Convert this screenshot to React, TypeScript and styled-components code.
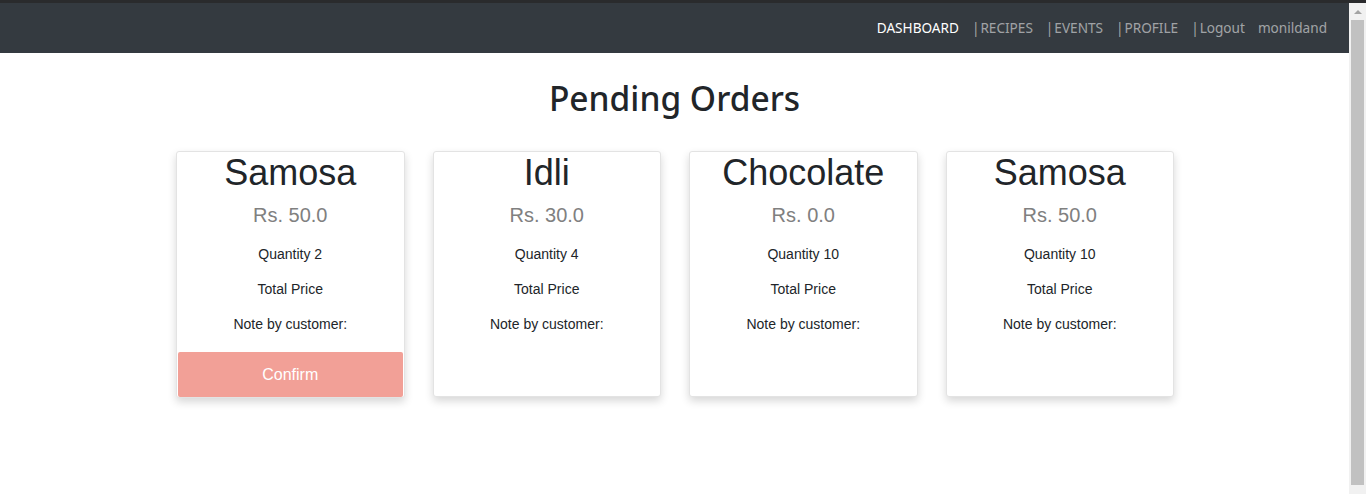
import React from "react";
import styled, { createGlobalStyle } from "styled-components";

const GlobalStyle = createGlobalStyle`
  html, body {
    margin: 0;
    padding: 0;
    height: 100%;
    overflow: hidden;
    background: #2b2b2b;
  }
  #root { height: 100%; }
  * { box-sizing: border-box; }
`;

const Frame = styled.div`
  display: flex;
  flex-direction: column;
  height: 100vh;
`;

const TopEdge = styled.div`
  height: 3px;
  flex: none;
  background: #2a2b2d;
`;

const Viewport = styled.div`
  flex: 1;
  display: flex;
  min-height: 0;
`;

const Page = styled.main`
  flex: 1;
  min-width: 0;
  overflow: hidden;
  background: #ffffff;
  font-family: "Liberation Sans", Arial, sans-serif;
  color: #212529;
`;

const ScrollBar = styled.div`
  width: 17px;
  flex: none;
  background: #f1f1f1;
  display: flex;
  flex-direction: column;
  align-items: center;
`;

const ScrollArrow = styled.div`
  height: 17px;
  width: 17px;
  flex: none;
  display: flex;
  align-items: center;
  justify-content: center;
`;

const ScrollThumb = styled.div`
  width: 13px;
  height: 465px;
  background: #c1c1c1;
`;

const NavBar = styled.nav`
  height: 50px;
  background: #343a40;
  display: flex;
  align-items: center;
  justify-content: flex-end;
  padding: 0 22px 2px 0;
  gap: 13px;
  font-family: "Noto Sans", "Open Sans", sans-serif;
  font-size: 13.6px;
`;

const NavLink = styled.a<{ $active?: boolean }>`
  color: ${(p) => (p.$active ? "#ffffff" : "rgba(255,255,255,0.55)")};
  text-decoration: none;
  white-space: nowrap;
`;

const Pipe = styled.span`
  margin-right: 1px;
`;

const Heading = styled.h2`
  margin: 22px 0 0;
  height: 47px;
  text-align: center;
  font-family: "Noto Sans", "Open Sans", sans-serif;
  font-weight: 500;
  font-size: 33.5px;
  line-height: 47px;
  color: #212529;
`;

const CardRow = styled.div`
  display: flex;
  justify-content: center;
  align-items: flex-start;
  gap: 28px;
  margin-top: 29px;
  padding-left: 1px;
`;

const Card = styled.div`
  width: 228.5px;
  background: #fff;
  border: 1px solid #e3e3e3;
  border-radius: 3px;
  box-shadow: 0 4px 8px rgba(0, 0, 0, 0.16);
  display: flex;
  flex-direction: column;
  align-items: stretch;
  text-align: center;
`;

const Title = styled.div`
  font-size: 36px;
  line-height: 43px;
  margin-top: -1px;
  color: #212529;
`;

const Price = styled.div`
  font-size: 20px;
  line-height: 24px;
  margin-top: 9px;
  color: #808080;
`;

const Line = styled.p`
  margin: 15px 0 0;
  font-size: 14px;
  line-height: 20px;
  color: #212529;
  &:first-of-type {
    margin-top: 17px;
  }
`;

const ConfirmButton = styled.button`
  margin: 18px 1px 0;
  height: 45px;
  padding-top: 2px;
  border: none;
  border-radius: 2px;
  background: #f2a097;
  color: #fff;
  font-family: "Liberation Sans", Arial, sans-serif;
  font-size: 16px;
  cursor: pointer;
`;

const FooterSpace = styled.div`
  height: 62px;
`;

type Order = { name: string; price: string; qty: number; confirm?: boolean };

const orders: Order[] = [
  { name: "Samosa", price: "50.0", qty: 2, confirm: true },
  { name: "Idli", price: "30.0", qty: 4 },
  { name: "Chocolate", price: "0.0", qty: 10 },
  { name: "Samosa", price: "50.0", qty: 10 },
];

const links = ["RECIPES", "EVENTS", "PROFILE", "Logout"];

export default function App() {
  return (
    <>
      <GlobalStyle />
      <Frame>
        <TopEdge />
        <Viewport>
          <Page>
            <NavBar>
              <NavLink $active>DASHBOARD</NavLink>
              {links.map((l) => (
                <NavLink key={l}>
                  <Pipe>|</Pipe>
                  {l}
                </NavLink>
              ))}
              <NavLink>monildand</NavLink>
            </NavBar>
            <Heading>Pending Orders</Heading>
            <CardRow>
              {orders.map((o, i) => (
                <Card key={i}>
                  <Title>{o.name}</Title>
                  <Price>Rs. {o.price}</Price>
                  <Line>Quantity {o.qty}</Line>
                  <Line>Total Price</Line>
                  <Line>Note by customer:</Line>
                  {o.confirm ? <ConfirmButton>Confirm</ConfirmButton> : <FooterSpace />}
                </Card>
              ))}
            </CardRow>
          </Page>
          <ScrollBar>
            <ScrollArrow>
              <svg width="8" height="4" viewBox="0 0 8 4">
                <path d="M0 4 L4 0 L8 4 Z" fill="#a3a3a3" />
              </svg>
            </ScrollArrow>
            <ScrollThumb />
          </ScrollBar>
        </Viewport>
      </Frame>
    </>
  );
}
